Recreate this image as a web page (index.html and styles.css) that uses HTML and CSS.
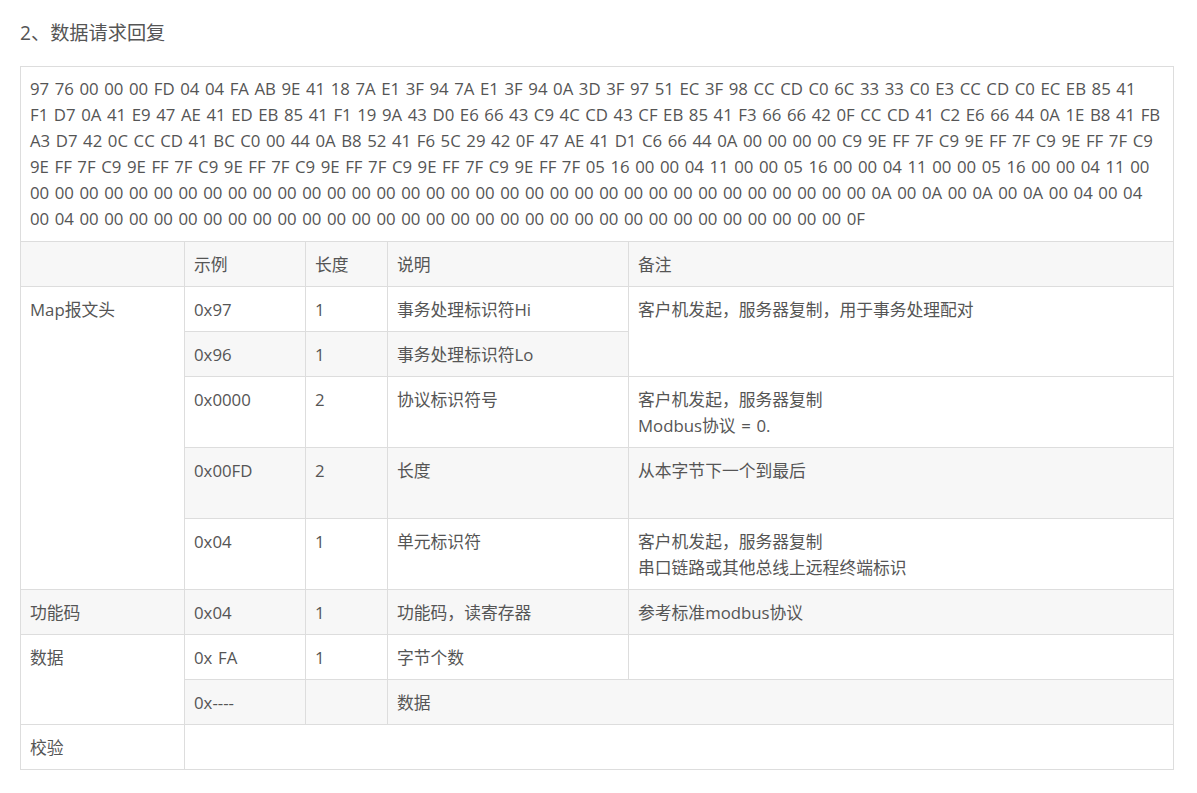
FILE: index.html
```html
<!DOCTYPE html>
<html lang="zh-CN">
<head>
<meta charset="utf-8">
<title>数据请求回复</title>
<link rel="stylesheet" href="styles.css">
</head>
<body>
<h2 class="title">2、数据请求回复</h2>
<table class="proto">
<colgroup><col class="c1"><col class="c2"><col class="c3"><col class="c4"><col class="c5"></colgroup>
<tbody>
<tr><td colspan="5" class="hex">97 76 00 00 00 FD 04 04 FA AB 9E 41 18 7A E1 3F 94 7A E1 3F 94 0A 3D 3F 97 51 EC 3F 98 CC CD C0 6C 33 33 C0 E3 CC CD C0 EC EB 85 41<br>F1 D7 0A 41 E9 47 AE 41 ED EB 85 41 F1 19 9A 43 D0 E6 66 43 C9 4C CD 43 CF EB 85 41 F3 66 66 42 0F CC CD 41 C2 E6 66 44 0A 1E B8 41 FB<br>A3 D7 42 0C CC CD 41 BC C0 00 44 0A B8 52 41 F6 5C 29 42 0F 47 AE 41 D1 C6 66 44 0A 00 00 00 00 C9 9E FF 7F C9 9E FF 7F C9 9E FF 7F C9<br>9E FF 7F C9 9E FF 7F C9 9E FF 7F C9 9E FF 7F C9 9E FF 7F C9 9E FF 7F 05 16 00 00 04 11 00 00 05 16 00 00 04 11 00 00 05 16 00 00 04 11 00<br>00 00 00 00 00 00 00 00 00 00 00 00 00 00 00 00 00 00 00 00 00 00 00 00 00 00 00 00 00 00 00 00 00 00 0A 00 0A 00 0A 00 0A 00 04 00 04<br>00 04 00 00 00 00 00 00 00 00 00 00 00 00 00 00 00 00 00 00 00 00 00 00 00 00 00 00 00 00 00 00 00 0F</td></tr>
<tr><td></td><td>示例</td><td>长度</td><td>说明</td><td>备注</td></tr>
<tr><td rowspan="5">Map报文头</td><td>0x97</td><td>1</td><td>事务处理标识符Hi</td><td rowspan="2">客户机发起，服务器复制，用于事务处理配对</td></tr>
<tr><td>0x96</td><td>1</td><td>事务处理标识符Lo</td></tr>
<tr><td>0x0000</td><td>2</td><td>协议标识符号</td><td>客户机发起，服务器复制<br>Modbus协议 = 0.</td></tr>
<tr><td>0x00FD</td><td>2</td><td>长度</td><td>从本字节下一个到最后<br>&nbsp;</td></tr>
<tr><td>0x04</td><td>1</td><td>单元标识符</td><td>客户机发起，服务器复制<br>串口链路或其他总线上远程终端标识</td></tr>
<tr><td>功能码</td><td>0x04</td><td>1</td><td>功能码，读寄存器</td><td>参考标准modbus协议</td></tr>
<tr><td rowspan="2">数据</td><td>0x FA</td><td>1</td><td>字节个数</td><td></td></tr>
<tr><td>0x----</td><td></td><td colspan="2">数据</td></tr>
<tr><td>校验</td><td colspan="4">&nbsp;</td></tr>
</tbody>
</table>
</body>
</html>
```
FILE: styles.css
```css
html, body { margin: 0; padding: 0; background: #fff; }
body {
  padding: 20px 23px 0 20px;
  font-family: "Open Sans", "Noto Sans CJK SC", sans-serif;
  font-size: 16.8px;
  line-height: 26px;
  word-spacing: 1.3px;
  color: #555;
}
.title {
  margin: 0 0 21px;
  font-size: 19.2px;
  font-weight: 400;
  line-height: 25px;
}
.proto {
  width: 1154px;
  table-layout: fixed;
  border-collapse: collapse;
  border: 1px solid #ddd;
}
.proto td {
  padding: 10px 9px 8px;
  border: 1px solid #ddd;
  vertical-align: top;
}
.proto td.hex {
  padding: 9px;
  white-space: nowrap;
  word-spacing: 1.2px;
}
.proto tr:nth-child(even) td { background: #f7f7f7; }
.proto tr:nth-child(even) td[rowspan] { background: #fff; }
.c1 { width: 164px; }
.c2 { width: 121px; }
.c3 { width: 82px; }
.c4 { width: 241px; }
```
